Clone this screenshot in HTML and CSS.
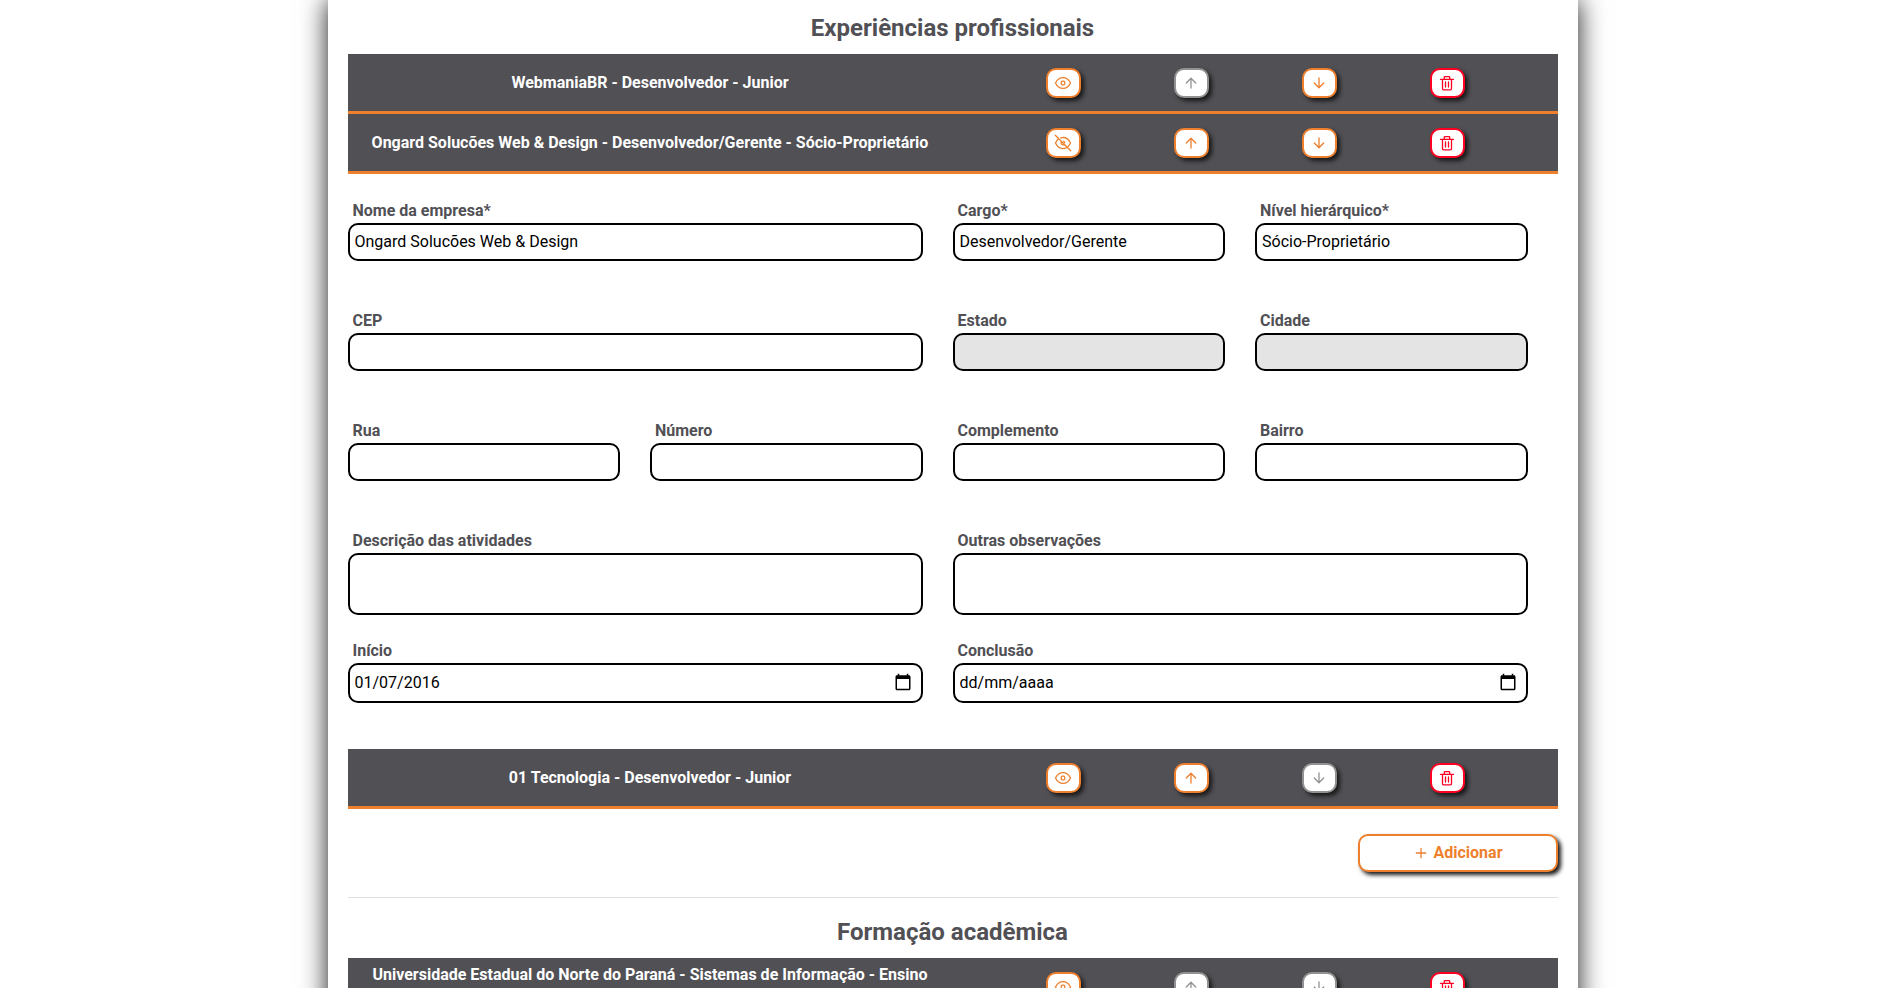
FILE: index.html
```html
<!DOCTYPE html>
<html lang="pt-BR">
<head>
<meta charset="utf-8">
<title>Currículo</title>
<link rel="stylesheet" href="styles.css">
</head>
<body>
<svg class="sprite" aria-hidden="true">
  <symbol id="eye" viewBox="0 0 18 18"><path d="M1.500 9C3.200 5.400 5.800 3.600 9 3.600S14.800 5.400 16.500 9C14.800 12.600 12.200 14.400 9 14.400S3.200 12.600 1.500 9Z"/><rect x="7.200" y="7.200" width="3.600" height="3.600" rx="1.200"/></symbol>
  <symbol id="eye-slash" viewBox="0 0 18 18"><path d="M1.300 1.300L16.700 16.700M6.800 3.900C11 2.700 14.500 4.800 16.500 9 15.900 10.300 15.200 11.300 14.300 12.200M4 5.200C3 6.100 2.200 7.400 1.500 9c2.300 4.800 6.300 6.500 10.700 4.900M7.500 7.500C6.700 8.700 7 10.800 9 10.900 9.700 10.900 10.200 10.700 10.600 10.400M9.600 7.300C10.300 7.500 10.700 8 10.800 8.600"/></symbol>
  <symbol id="up" viewBox="0 0 18 18"><path d="M9 14V4.300M4.300 9L9 4.300 13.700 9"/></symbol>
  <symbol id="down" viewBox="0 0 18 18"><path d="M9 4V13.700M4.300 9L9 13.700 13.700 9"/></symbol>
  <symbol id="trash" viewBox="0 0 18 18"><path d="M2.500 5.300H15.500M4.500 5.500V14.700Q4.500 15.800 5.500 15.800H12.500Q13.500 15.800 13.500 14.700V5.500M6.300 5V3.300Q6.300 2.600 7 2.600H11Q11.700 2.600 11.700 3.300V5M7.500 8V13M10.500 8V13"/></symbol>
  <symbol id="plus" viewBox="0 0 16 16"><path d="M8 3.300V12.700M3.300 8H12.700"/></symbol>
  <symbol id="calendar" viewBox="0 0 24 24"><path d="M20 3h-1V1h-2v2H7V1H5v2H4c-1.100 0-2 .9-2 2v16c0 1.100.9 2 2 2h16c1.100 0 2-.9 2-2V5c0-1.100-.9-2-2-2zm0 18H4V8h16v13z"/></symbol>
</svg>

<main class="sheet">
  <section class="section">
    <h2 class="heading">Experiências profissionais</h2>

    <div class="entry">
      <h3 class="entry-title">WebmaniaBR - Desenvolvedor - Junior</h3>
      <div class="actions">
        <button class="action" type="button" aria-label="Mostrar"><svg class="icon"><use href="#eye"/></svg></button>
        <button class="action" type="button" aria-label="Subir" disabled><svg class="icon"><use href="#up"/></svg></button>
        <button class="action" type="button" aria-label="Descer"><svg class="icon"><use href="#down"/></svg></button>
        <button class="action danger" type="button" aria-label="Excluir"><svg class="icon"><use href="#trash"/></svg></button>
      </div>
    </div>

    <div class="entry">
      <h3 class="entry-title">Ongard Solucões Web &amp; Design - Desenvolvedor/Gerente - Sócio-Proprietário</h3>
      <div class="actions">
        <button class="action" type="button" aria-label="Ocultar"><svg class="icon"><use href="#eye-slash"/></svg></button>
        <button class="action" type="button" aria-label="Subir"><svg class="icon"><use href="#up"/></svg></button>
        <button class="action" type="button" aria-label="Descer"><svg class="icon"><use href="#down"/></svg></button>
        <button class="action danger" type="button" aria-label="Excluir"><svg class="icon"><use href="#trash"/></svg></button>
      </div>
    </div>

    <form class="form">
      <div class="field wide"><label class="label" for="empresa">Nome da empresa*</label><input class="input" id="empresa" type="text" value="Ongard Solucões Web &amp; Design"></div>
      <div class="field"><label class="label" for="cargo">Cargo*</label><input class="input" id="cargo" type="text" value="Desenvolvedor/Gerente"></div>
      <div class="field"><label class="label" for="nivel">Nível hierárquico*</label><input class="input" id="nivel" type="text" value="Sócio-Proprietário"></div>

      <div class="field wide"><label class="label" for="cep">CEP</label><input class="input" id="cep" type="text"></div>
      <div class="field"><label class="label" for="estado">Estado</label><input class="input" id="estado" type="text" disabled></div>
      <div class="field"><label class="label" for="cidade">Cidade</label><input class="input" id="cidade" type="text" disabled></div>

      <div class="field"><label class="label" for="rua">Rua</label><input class="input" id="rua" type="text"></div>
      <div class="field"><label class="label" for="numero">Número</label><input class="input" id="numero" type="text"></div>
      <div class="field"><label class="label" for="complemento">Complemento</label><input class="input" id="complemento" type="text"></div>
      <div class="field"><label class="label" for="bairro">Bairro</label><input class="input" id="bairro" type="text"></div>

      <div class="field wide"><label class="label" for="descricao">Descrição das atividades</label><textarea class="input area" id="descricao"></textarea></div>
      <div class="field wide"><label class="label" for="observacoes">Outras observações</label><textarea class="input area" id="observacoes"></textarea></div>

      <div class="field wide"><label class="label" for="inicio">Início</label>
        <div class="date"><input class="input date-input" id="inicio" type="text" value="01/07/2016"><button class="picker" type="button" aria-label="Abrir calendário"><svg class="icon solid"><use href="#calendar"/></svg></button></div></div>
      <div class="field wide"><label class="label" for="conclusao">Conclusão</label>
        <div class="date"><input class="input date-input" id="conclusao" type="text" placeholder="dd/mm/aaaa"><button class="picker" type="button" aria-label="Abrir calendário"><svg class="icon solid"><use href="#calendar"/></svg></button></div></div>
    </form>

    <div class="entry">
      <h3 class="entry-title">01 Tecnologia - Desenvolvedor - Junior</h3>
      <div class="actions">
        <button class="action" type="button" aria-label="Mostrar"><svg class="icon"><use href="#eye"/></svg></button>
        <button class="action" type="button" aria-label="Subir"><svg class="icon"><use href="#up"/></svg></button>
        <button class="action" type="button" aria-label="Descer" disabled><svg class="icon"><use href="#down"/></svg></button>
        <button class="action danger" type="button" aria-label="Excluir"><svg class="icon"><use href="#trash"/></svg></button>
      </div>
    </div>

    <div class="footer">
      <button class="add" type="button"><svg class="icon small"><use href="#plus"/></svg>Adicionar</button>
    </div>
  </section>

  <section class="section">
    <h2 class="heading">Formação acadêmica</h2>
    <div class="entry">
      <h3 class="entry-title">Universidade Estadual do Norte do Paraná - Sistemas de Informação - Ensino Superior</h3>
      <div class="actions">
        <button class="action" type="button" aria-label="Mostrar"><svg class="icon"><use href="#eye"/></svg></button>
        <button class="action" type="button" aria-label="Subir" disabled><svg class="icon"><use href="#up"/></svg></button>
        <button class="action" type="button" aria-label="Descer" disabled><svg class="icon"><use href="#down"/></svg></button>
        <button class="action danger" type="button" aria-label="Excluir"><svg class="icon"><use href="#trash"/></svg></button>
      </div>
    </div>
  </section>
</main>
</body>
</html>
```

FILE: styles.css
```css
:root {
  --orange: #ee7f2d;
  --dark: #515055;
  --red: #ff0022;
  --grey: #929292;
}

* {
  box-sizing: border-box;
}

html {
  overflow: hidden;
}

body {
  margin: 0;
  padding-left: 5px;
  background: #fff;
  color: var(--dark);
  font: 16px/24px Roboto, sans-serif;
}

.sprite {
  display: none;
}

.sheet {
  max-width: 1250px;
  margin: 0 auto;
  padding: 0 20px;
  background: #fff;
  box-shadow: 0 0 25px rgba(0, 0, 0, 0.9);
}

.section + .section {
  border-top: 1px solid #dedfe0;
}

.heading {
  margin: 0;
  padding: 13px 0 11px;
  font-size: 24px;
  line-height: 30px;
  font-weight: 700;
  text-align: center;
}

.section + .section .heading {
  padding-top: 19px;
}

.entry {
  display: grid;
  grid-template-columns: 1fr 1fr;
  align-items: center;
  min-height: 60px;
  background: var(--dark);
  border-bottom: 3px solid var(--orange);
}

.entry-title {
  margin: 0;
  padding: 4px 20px;
  color: #fff;
  font-size: 16px;
  font-weight: 700;
  text-align: center;
}

.actions {
  display: flex;
  justify-content: space-evenly;
}

.icon {
  width: 18px;
  height: 18px;
  fill: none;
  stroke: currentColor;
  stroke-width: 1.3;
  stroke-linecap: round;
  stroke-linejoin: round;
}

.solid {
  fill: currentColor;
  stroke: none;
}

.small {
  width: 16px;
  height: 16px;
}

.action {
  display: flex;
  align-items: center;
  justify-content: center;
  width: 35px;
  height: 30px;
  padding: 0;
  color: var(--orange);
  background: #fff;
  border: 2px solid currentColor;
  border-radius: 10px;
  box-shadow: 3px 3px 4px #1a1a1a;
}

.action:disabled {
  color: var(--grey);
}

.danger {
  color: var(--red);
}

.form {
  display: grid;
  grid-template-columns: repeat(4, 1fr);
  column-gap: 30px;
  padding: 25px 30px 46px 0;
}

.field {
  min-height: 110px;
}

.field:nth-last-child(-n+2) {
  min-height: 0;
}

.wide {
  grid-column: span 2;
}

.label {
  display: block;
  padding: 0 5px;
  font-weight: 700;
}

.input {
  display: block;
  width: 100%;
  height: 38px;
  padding: 0 5px 2px;
  color: #000;
  background: #fff;
  border: 2px solid #000;
  border-radius: 10px;
  font: 16px/24px Roboto, sans-serif;
}

.input:disabled {
  background: #e4e4e4;
}

.input::placeholder {
  color: #000;
  opacity: 1;
}

.area {
  height: 62px;
  resize: none;
}

.date {
  position: relative;
}

.date-input {
  height: 40px;
}

.picker {
  position: absolute;
  top: 10px;
  right: 11px;
  display: flex;
  padding: 0;
  color: #000;
  background: none;
  border: 0;
}

.footer {
  display: flex;
  justify-content: flex-end;
  padding: 25px 0;
}

.add {
  display: flex;
  align-items: center;
  justify-content: center;
  gap: 5px;
  width: 200px;
  height: 38px;
  color: var(--orange);
  background: #fff;
  border: 2px solid var(--orange);
  border-radius: 10px;
  box-shadow: 3px 3px 4px #1a1a1a;
  font: 700 16px/24px Roboto, sans-serif;
}
```
